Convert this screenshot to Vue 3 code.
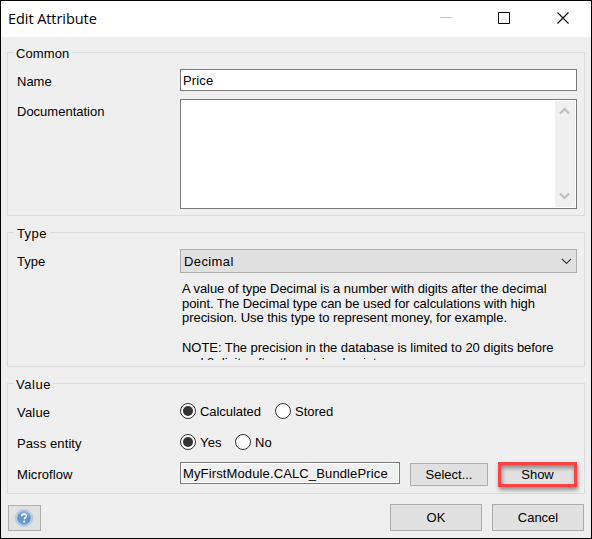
<script setup>
import { ref } from 'vue'

const name = ref('Price')
const microflow = ref('MyFirstModule.CALC_BundlePrice')
const calculated = ref(true)
const passEntity = ref(true)
const description = [
  'A value of type Decimal is a number with digits after the decimal',
  'point. The Decimal type can be used for calculations with high',
  'precision. Use this type to represent money, for example.',
  '',
  'NOTE: The precision in the database is limited to 20 digits before',
  'and 8 digits after the decimal point.',
]
</script>

<template>
  <div class="dialog">
    <header class="titlebar">
      <h1>Edit Attribute</h1>
      <svg class="window-icons" width="130" height="14" viewBox="0 0 130 14">
        <path d="M0 6.5h12" stroke="#c4c4c4" />
        <path d="M58.500 1.500h11v11h-11z" fill="none" stroke="#000" />
        <path d="M117.500 1.500l11 11M128.500 1.500l-11 11" stroke="#000" stroke-width="1.1" />
      </svg>
    </header>

    <main>
      <section class="group common">
        <h2><span class="t-common">Common</span></h2>
        <div class="row name-row">
          <label>Name</label>
          <div class="field"><span class="t-price">{{ name }}</span></div>
        </div>
        <div class="row doc-row">
          <label>Documentation</label>
          <div class="textarea">
            <div class="scrollbar">
              <svg width="11" height="8" viewBox="0 0 11 8"><path d="M1 6.500l4.500-4.500 4.500 4.500" /></svg>
              <svg width="11" height="8" viewBox="0 0 11 8"><path d="M1 1.500l4.500 4.500 4.500-4.500" /></svg>
            </div>
          </div>
        </div>
      </section>

      <section class="group type">
        <h2><span class="t-type">Type</span></h2>
        <div class="row type-row">
          <label>Type</label>
          <div class="combo">
            <span class="t-decimal">Decimal</span>
            <svg width="11" height="7" viewBox="0 0 11 7"><path d="M1 1l4.500 4.500 4.500-4.500" fill="none" stroke="#404040" stroke-width="1.2" /></svg>
          </div>
        </div>
        <div class="description">
          <p v-for="(line, i) in description" :key="i">{{ line }}</p>
        </div>
      </section>

      <section class="group value">
        <h2><span class="t-value">Value</span></h2>
        <div class="row value-row">
          <label class="t-value-label">Value</label>
          <div class="radios">
            <i class="radio" :class="{ on: calculated }"></i><span class="t-calc">Calculated</span>
            <i class="radio" :class="{ on: !calculated }"></i><span>Stored</span>
          </div>
        </div>
        <div class="row pass-row">
          <label class="t-pass">Pass entity</label>
          <div class="radios">
            <i class="radio" :class="{ on: passEntity }"></i><span class="t-yes">Yes</span>
            <i class="radio" :class="{ on: !passEntity }"></i><span>No</span>
          </div>
        </div>
        <div class="row flow-row">
          <label class="t-flow">Microflow</label>
          <div class="field readonly"><span class="t-module">{{ microflow }}</span></div>
          <button class="select"><span>Select...</span></button>
          <button class="show"><span>Show</span></button>
        </div>
      </section>
    </main>

    <footer>
      <button class="help" aria-label="Help">
        <svg width="18" height="18" viewBox="0 0 18 18">
          <defs>
            <linearGradient id="ball" x1="0" y1="0" x2="0" y2="1">
              <stop offset="0" stop-color="#8eb3de" />
              <stop offset="0.5" stop-color="#5e8fc8" />
              <stop offset="1" stop-color="#75a5d8" />
            </linearGradient>
          </defs>
          <circle cx="9" cy="9" r="8.500" fill="#c5d8ee" stroke="#a2bddd" stroke-width="0.8" />
          <circle cx="9" cy="9" r="6.700" fill="url(#ball)" stroke="#6f98c8" stroke-width="0.6" />
          <path d="M6.700 7.200c0-3 4.900-2.900 4.700-.2-.1 1.600-2.100 1.600-2.100 3.300" fill="none" stroke="#fff" stroke-width="1.500" />
          <circle cx="9.200" cy="12.500" r="0.950" fill="#fff" />
        </svg>
      </button>
      <button class="ok"><span>OK</span></button>
      <button class="cancel"><span>Cancel</span></button>
    </footer>
  </div>
</template>

<style>
body {
  margin: 0;
}
</style>

<style scoped>
* {
  box-sizing: border-box;
}
.dialog {
  width: 592px;
  height: 539px;
  border: 1px solid #000;
  background: #efefef;
  color: #000;
  font: 13px/16px "Liberation Sans", Arial, sans-serif;
  white-space: nowrap;
  overflow: hidden;
}
.titlebar {
  height: 36px;
  padding: 0 21px 0 7px;
  background: #fff;
  display: flex;
  align-items: center;
  justify-content: space-between;
}
h1 {
  margin: 0;
  font: 14.500px/20px "Open Sans", "Noto Sans", sans-serif;
  letter-spacing: -0.07px;
}
.window-icons {
  margin-top: -2px;
}
main {
  padding: 15px 6px 0;
  display: flex;
  flex-direction: column;
  gap: 16px;
}
.group {
  border: 1px solid #dcdcdc;
}
.common {
  height: 164px;
}
.type {
  height: 135px;
}
.value {
  height: 111px;
}
h2 {
  margin: -8px 0 0 6px;
  height: 16px;
  font: inherit;
}
h2 span {
  display: inline-block;
  height: 17px;
  padding: 1px 2px 0;
  background: #efefef;
}
.t-common {
  width: 58px;
  letter-spacing: 0.1px;
}
.t-type {
  width: 36px;
  padding-left: 3px;
  letter-spacing: 0.4px;
}
.t-value {
  width: 39px;
  letter-spacing: 0.55px;
}
.t-value-label {
  letter-spacing: 0.2px;
}
.t-pass {
  letter-spacing: 0.1px;
}
.t-flow {
  letter-spacing: 0.06px;
}
.t-price {
  letter-spacing: 0.15px;
}
.t-decimal {
  padding-top: 2px;
  letter-spacing: 0.4px;
}
.t-module {
  letter-spacing: 0.13px;
}
.row {
  display: flex;
  padding-left: 9px;
}
label {
  width: 163px;
  flex: none;
}
.name-row label,
.doc-row label,
.type-row label,
.flow-row label {
  padding-top: 5px;
}
.value-row label,
.pass-row label {
  height: 16px;
  padding-top: 2px;
}
.name-row {
  margin-top: 8px;
}
.field {
  width: 397px;
  height: 22px;
  padding: 3px 2px 0;
  border: 1px solid #7a7a7a;
  background: #fff;
}
.doc-row {
  margin-top: 8px;
}
.textarea {
  width: 397px;
  height: 110px;
  padding: 1px;
  border: 1px solid #7a7a7a;
  background: #fff;
  display: flex;
  justify-content: flex-end;
}
.scrollbar {
  width: 20px;
  padding: 6px 4px 7px;
  background: #f0f0f0;
  display: flex;
  flex-direction: column;
  justify-content: space-between;
}
.scrollbar path {
  fill: none;
  stroke: #bfbfbf;
  stroke-width: 2.2;
}
.type-row {
  margin-top: 8px;
}
.combo {
  width: 397px;
  height: 24px;
  padding: 0 4px 0 3px;
  border: 1px solid #adadad;
  background: #e1e1e1;
  display: flex;
  align-items: center;
  justify-content: space-between;
}
.description {
  height: 79px;
  margin: 8px 0 0 174px;
  overflow: hidden;
  letter-spacing: -0.05px;
}
.description p {
  margin: 0;
  height: 14.700px;
  line-height: 15px;
}
.description p:last-child {
  padding-top: 1px;
  letter-spacing: -0.1px;
}
.value-row {
  margin-top: 11px;
}
.pass-row {
  margin-top: 15px;
}
.radios {
  display: flex;
  align-items: center;
  height: 16px;
}
.radios span {
  height: 16px;
  line-height: 18px;
}
.radio {
  width: 16px;
  height: 16px;
  margin-right: 4px;
  border: 1px solid #333;
  border-radius: 50%;
  background: #fff;
  display: grid;
  place-items: center;
}
.radio.on::before {
  content: "";
  width: 10px;
  height: 10px;
  border-radius: 50%;
  background: #333;
}
.t-calc {
  width: 75px;
  letter-spacing: -0.05px;
}
.t-yes {
  width: 35px;
  letter-spacing: 0.2px;
}
.flow-row {
  margin-top: 12px;
}
.field.readonly {
  width: 220px;
  background: #f0f0f0;
  box-shadow: inset 0 0 0 1px #fff;
}
button {
  margin: 0;
  padding: 0;
  border: 1px solid #adadad;
  background: #e1e1e1;
  color: #000;
  font: inherit;
  display: flex;
  align-items: center;
  justify-content: center;
}
button span {
  padding-top: 1px;
}
.select {
  width: 78px;
  height: 23px;
  margin: 1px 0 0 10px;
}
.show {
  width: 79px;
  height: 25px;
  margin: 0 0 0 10px;
  border: 3px solid #fc4242;
  box-shadow: 1px 3px 4px rgba(0, 0, 0, 0.4), inset 1px 3px 4px rgba(0, 0, 0, 0.4);
}
footer {
  padding: 10px 7px 0;
  display: flex;
}
.help {
  width: 33px;
  height: 26px;
  margin-top: 1px;
}
.help svg {
  margin-right: 1px;
}
.ok {
  width: 92px;
  height: 27px;
  margin-left: auto;
}
.cancel {
  width: 92px;
  height: 27px;
  margin-left: 10px;
}
</style>
